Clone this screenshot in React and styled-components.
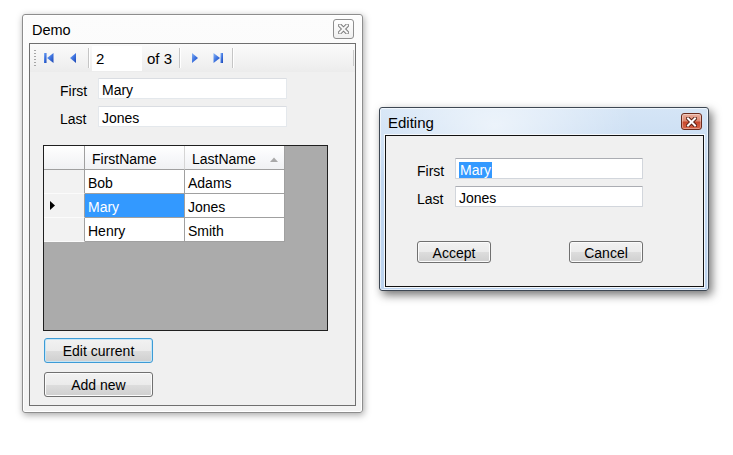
import React from 'react'
import styled, { createGlobalStyle, css } from 'styled-components'

const GlobalStyle = createGlobalStyle`
  html, body { margin: 0; padding: 0; background: #fff; }
  body {
    font-family: "Liberation Sans", Arial, sans-serif;
    font-size: 14px;
    color: #000;
  }
`

const Desktop = styled.div`
  position: relative;
  width: 733px;
  height: 455px;
  overflow: hidden;
  background: #fff;
`

// windows sit on the desktop at their own coordinates
const Window = styled.div`
  position: absolute;
  left: ${p => p.$x}px;
  top: ${p => p.$y}px;
  width: ${p => p.$w}px;
  height: ${p => p.$h}px;
  box-sizing: border-box;
  display: flex;
  flex-direction: column;
  border-radius: 3px;
  ${p => p.$active ? css`
    border: 1px solid #3d4753;
    padding: 0 4px 3px 5px;
    background:
      radial-gradient(ellipse 60% 70% at 35% 10%, rgba(255,255,255,0.6), rgba(255,255,255,0) 70%),
      linear-gradient(#d5e5f6, #c1d7f0 40%, #bcd3ee);
    box-shadow: inset 0 0 0 1px rgba(255,255,255,0.6), 3px 4px 10px rgba(0,0,0,0.55);
  ` : css`
    border: 1px solid #8d8d8d;
    padding: 0 6px 6px 6px;
    background: linear-gradient(#fcfcfc, #f3f3f3);
    box-shadow: inset 0 0 0 1px #fff, 1px 2px 7px rgba(0,0,0,0.35);
  `}
`

const TitleBar = styled.div`
  display: flex;
  align-items: center;
  justify-content: space-between;
  height: ${p => p.$h}px;
  padding: 0 2px 0 3px;
  flex-shrink: 0;
`

const TitleText = styled.span`
  font-family: "Liberation Sans", Arial, sans-serif;
  font-size: ${p => p.$size}px;
  color: #000;
  margin-top: ${p => p.$dy || 0}px;
`

const CloseBox = styled.div`
  display: flex;
  align-items: center;
  justify-content: center;
  box-sizing: border-box;
  border-radius: 3px;
  ${p => p.$red ? css`
    width: 21px;
    height: 17px;
    border: 1px solid #6b2a1c;
    background: linear-gradient(#eab0a0, #de8a73 45%, #c8472c 55%, #d9674a);
    box-shadow: inset 0 0 0 1px rgba(255,255,255,0.35);
  ` : css`
    width: 21px;
    height: 20px;
    border: 1px solid #8e8e8e;
    background: linear-gradient(#ffffff, #f0f0f0);
  `}
`

const CloseGlyph = ({ red }) => (
  <svg width="11" height="10" viewBox="0 0 11 10">
    <path d="M2 1.5 L9 8.5 M9 1.5 L2 8.5" stroke={red ? '#5a2015' : '#7c7c7c'} strokeWidth="4" strokeLinecap="square" fill="none" />
    <path d="M2 1.5 L9 8.5 M9 1.5 L2 8.5" stroke={red ? '#ffffff' : '#f6f6f6'} strokeWidth="2" strokeLinecap="square" fill="none" />
  </svg>
)

const Client = styled.div`
  flex: 1;
  display: flex;
  flex-direction: column;
  background: #f0f0f0;
  ${p => p.$dark ? css`
    border: 1px solid #111;
    box-shadow: 0 0 0 1px #f4f8fc;
  ` : css`
    border: 1px solid #6f6f6f;
  `}
`

/* ---------- toolbar ---------- */

const Toolbar = styled.div`
  display: flex;
  align-items: center;
  height: 28px;
  padding-left: 4px;
  background: linear-gradient(#fbfbfb, #f4f4f4 50%, #ececec);
`

const Grip = styled.div`
  width: 2px;
  height: 18px;
  margin-right: 1px;
  background-image: radial-gradient(circle, #a6a6a6 0.9px, transparent 1px);
  background-size: 2px 3px;
`

const ToolButton = styled.div`
  display: flex;
  align-items: center;
  justify-content: center;
  width: ${p => p.$w || 23}px;
  height: 22px;
`

const ToolSeparator = styled.div`
  width: ${p => p.$w || 7}px;
  height: 20px;
  display: flex;
  justify-content: center;
  &::before {
    content: "";
    width: 1px;
    height: 20px;
    background: #c5c5c5;
    box-shadow: 1px 0 0 #fff;
  }
`

const ToolInput = styled.div`
  width: 50px;
  height: 25px;
  box-sizing: border-box;
  padding: 4px 0 0 4px;
  background: #fff;
  font-size: 15px;
  line-height: 17px;
`

const ToolLabel = styled.span`
  padding: 0 4px 0 5px;
  font-size: 15px;
  line-height: 17px;
`

const ToolbarEnd = styled.div`
  margin-left: auto;
  margin-right: 1px;
  width: 1px;
  height: 16px;
  background: #c9c9c9;
`

const NavIcon = ({ dir, bar }) => {
  const id = `nav-${dir}-${bar ? 1 : 0}`
  return (
    <svg width="12" height="12" viewBox="0 0 12 12">
      <defs>
        <linearGradient id={id} x1="0" y1="0" x2="1" y2="1">
          <stop offset="0" stopColor="#8ab6f6" />
          <stop offset="0.5" stopColor="#3f74e0" />
          <stop offset="1" stopColor="#1c45b0" />
        </linearGradient>
      </defs>
      {dir === 'left' ? (
        <g fill={`url(#${id})`}>
          {bar && <rect x="1" y="1" width="2.5" height="10" />}
          <path d={bar ? 'M10.5 1 L10.5 11 L4 6 Z' : 'M9 1 L9 11 L3 6 Z'} />
        </g>
      ) : (
        <g fill={`url(#${id})`}>
          <path d={bar ? 'M1.5 1 L1.5 11 L8 6 Z' : 'M3 1 L3 11 L9 6 Z'} />
          {bar && <rect x="8.5" y="1" width="2.5" height="10" />}
        </g>
      )}
    </svg>
  )
}

/* ---------- fields ---------- */

const Form = styled.div`
  display: grid;
  grid-template-columns: ${p => p.$labelW}px ${p => p.$boxW}px;
  row-gap: 7px;
  padding: ${p => p.$top}px 0 0 ${p => p.$left}px;
`

const FieldLabel = styled.label`
  height: 21px;
  box-sizing: border-box;
  padding-top: 5px;
  line-height: 16px;
`

const TextBox = styled.div`
  height: 21px;
  box-sizing: border-box;
  padding: 3px 0 0 3px;
  line-height: 16px;
  background: #fff;
  border: 1px solid ${p => p.$strong ? '#d2d6dc' : '#e4e8ec'};
  border-top-color: ${p => p.$strong ? '#abadb3' : '#dadde2'};
  border-radius: 1px;
`

const Selected = styled.span`
  background: #3399ff;
  color: #fff;
  padding: 0 1px;
`

/* ---------- data grid ---------- */

const GridFrame = styled.div`
  margin: 18px 0 0 13px;
  width: 285px;
  height: 186px;
  box-sizing: border-box;
  border: 1px solid #1f1f1f;
  background: #ababab;
`

const GridRow = styled.div`
  display: flex;
  width: 241px;
  height: 24px;
`

const Cell = styled.div`
  width: ${p => p.$w}px;
  box-sizing: border-box;
  padding: 5px 0 0 ${p => p.$pad}px;
  line-height: 16px;
  white-space: nowrap;
  border-right: 1px solid #a0a0a0;
  border-bottom: 1px solid #a0a0a0;
  background: ${p => p.$selected ? '#3399ff' : '#fff'};
  color: ${p => p.$selected ? '#fff' : '#000'};
`

const HeaderCell = styled.div`
  display: flex;
  align-items: center;
  justify-content: space-between;
  width: ${p => p.$w}px;
  box-sizing: border-box;
  padding: 3px 6px 0 7px;
  border-right: 1px solid ${p => p.$last ? '#a0a0a0' : '#d5d5d5'};
  border-bottom: 1px solid #a0a0a0;
  background: linear-gradient(#ffffff, #f7f8fa 50%, #f0f1f3);
`

const RowHeader = styled.div`
  width: 41px;
  box-sizing: border-box;
  display: flex;
  align-items: center;
  padding-left: 6px;
  border-right: 1px solid #a0a0a0;
  border-bottom: 1px solid ${p => p.$corner ? '#a0a0a0' : '#fbfbfb'};
  background: ${p => p.$corner ? 'linear-gradient(#ffffff, #f0f1f3)' : '#f2f2f2'};
`

const SortGlyph = () => (
  <svg width="8" height="5" viewBox="0 0 8 5">
    <path d="M0 5 L4 0.5 L8 5 Z" fill="#a9a9a9" />
  </svg>
)

const RowArrow = () => (
  <svg width="5" height="9" viewBox="0 0 5 9">
    <path d="M0 0 L5 4.5 L0 9 Z" fill="#000" />
  </svg>
)

/* ---------- buttons ---------- */

const Button = styled.button`
  width: ${p => p.$w}px;
  height: ${p => p.$h}px;
  margin-top: ${p => p.$mt || 0}px;
  padding: 1px 0 0;
  box-sizing: border-box;
  font-family: "Liberation Sans", Arial, sans-serif;
  font-size: 14px;
  color: #000;
  border-radius: 3px;
  border: 1px solid ${p => p.$focused ? '#3c9bd6' : '#707070'};
  background: linear-gradient(#f2f2f2 0%, #ebebeb 50%, #dddddd 51%, #cfcfcf 100%);
  box-shadow: inset 0 0 0 1px ${p => p.$focused ? '#c4e5f6' : '#fbfbfb'};
`

const ButtonColumn = styled.div`
  display: flex;
  flex-direction: column;
  align-items: flex-start;
  padding-left: 14px;
`

const ButtonRow = styled.div`
  display: flex;
  gap: 78px;
  padding: 34px 0 0 31px;
`

const people = [
  { first: 'Bob', last: 'Adams' },
  { first: 'Mary', last: 'Jones' },
  { first: 'Henry', last: 'Smith' },
]

const App = () => {
  return (
    <Desktop>
      <GlobalStyle />

      <Window $x={22} $y={14} $w={341} $h={399}>
        <TitleBar $h={28}>
          <TitleText $size={14.5} $dy={2}>Demo</TitleText>
          <CloseBox>
            <CloseGlyph />
          </CloseBox>
        </TitleBar>
        <Client>
          <Toolbar>
            <Grip />
            <ToolButton $w={24}><NavIcon dir="left" bar /></ToolButton>
            <ToolButton $w={24}><NavIcon dir="left" /></ToolButton>
            <ToolSeparator />
            <ToolInput>2</ToolInput>
            <ToolLabel>of 3</ToolLabel>
            <ToolSeparator />
            <ToolButton><NavIcon dir="right" /></ToolButton>
            <ToolButton><NavIcon dir="right" bar /></ToolButton>
            <ToolSeparator />
            <ToolbarEnd />
          </Toolbar>

          <Form $labelW={38} $boxW={189} $top={6} $left={30}>
            <FieldLabel>First</FieldLabel>
            <TextBox>Mary</TextBox>
            <FieldLabel>Last</FieldLabel>
            <TextBox>Jones</TextBox>
          </Form>

          <GridFrame>
            <GridRow>
              <RowHeader $corner />
              <HeaderCell $w={100}>FirstName</HeaderCell>
              <HeaderCell $w={100} $last>LastName<SortGlyph /></HeaderCell>
            </GridRow>
            {people.map((p, i) => (
              <GridRow key={p.first}>
                <RowHeader>{i === 1 && <RowArrow />}</RowHeader>
                <Cell $w={100} $pad={3} $selected={i === 1}>{p.first}</Cell>
                <Cell $w={100} $pad={3}>{p.last}</Cell>
              </GridRow>
            ))}
          </GridFrame>

          <ButtonColumn>
            <Button $w={109} $h={25} $mt={7} $focused>Edit current</Button>
            <Button $w={109} $h={25} $mt={9}>Add new</Button>
          </ButtonColumn>
        </Client>
      </Window>

      <Window $x={379} $y={107} $w={330} $h={184} $active>
        <TitleBar $h={27}>
          <TitleText $size={15} $dy={1}>Editing</TitleText>
          <CloseBox $red>
            <CloseGlyph red />
          </CloseBox>
        </TitleBar>
        <Client $dark>
          <Form $labelW={38} $boxW={188} $top={22} $left={31}>
            <FieldLabel>First</FieldLabel>
            <TextBox $strong><Selected>Mary</Selected></TextBox>
            <FieldLabel>Last</FieldLabel>
            <TextBox $strong>Jones</TextBox>
          </Form>
          <ButtonRow>
            <Button $w={74} $h={22}>Accept</Button>
            <Button $w={74} $h={22}>Cancel</Button>
          </ButtonRow>
        </Client>
      </Window>
    </Desktop>
  )
}

export default App
